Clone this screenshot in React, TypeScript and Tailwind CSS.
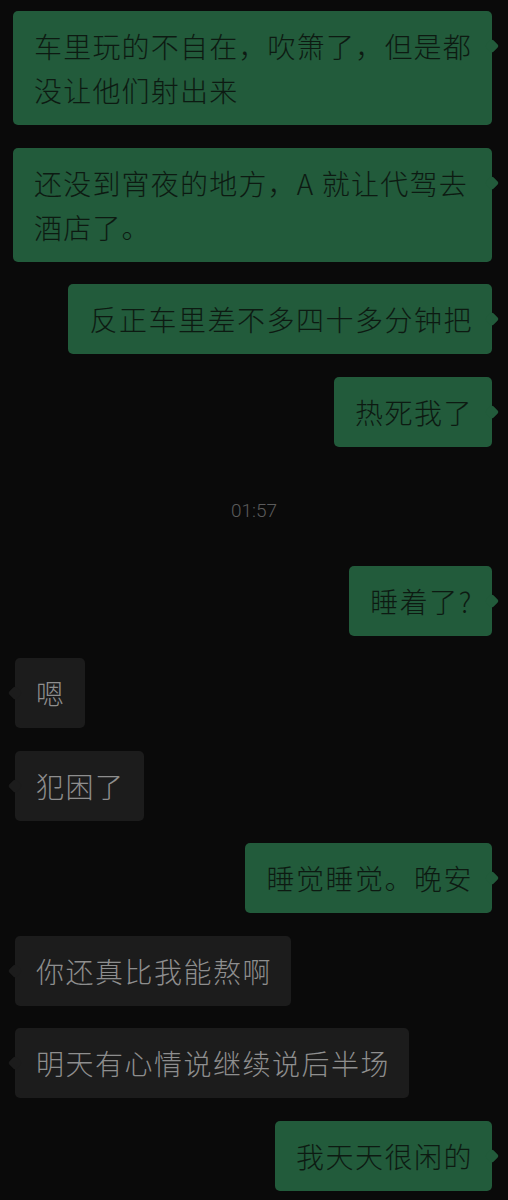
type Msg =
  | { kind: "me"; lines: string[] }
  | { kind: "them"; lines: string[] }
  | { kind: "time"; text: string };

const messages: Msg[] = [
  { kind: "me", lines: ["车里玩的不自在，吹箫了，但是都", "没让他们射出来"] },
  { kind: "me", lines: ["还没到宵夜的地方，A 就让代驾去", "酒店了。"] },
  { kind: "me", lines: ["反正车里差不多四十多分钟把"] },
  { kind: "me", lines: ["热死我了"] },
  { kind: "time", text: "01:57" },
  { kind: "me", lines: ["睡着了?"] },
  { kind: "them", lines: ["嗯"] },
  { kind: "them", lines: ["犯困了"] },
  { kind: "me", lines: ["睡觉睡觉。晚安"] },
  { kind: "them", lines: ["你还真比我能熬啊"] },
  { kind: "them", lines: ["明天有心情说继续说后半场"] },
  { kind: "me", lines: ["我天天很闲的"] },
];

function Bubble({ mine, lines }: { mine: boolean; lines: string[] }) {
  const wrapped = lines.length > 1;
  return (
    <div className={`flex w-full ${mine ? "justify-end pr-4" : "justify-start pl-[15px]"}`}>
      <div
        className={`relative rounded-[5px] py-[13px] pl-[21px] pr-[19px] ${wrapped ? "w-[479px]" : ""} ${
          mine ? "bg-[#225b3b] text-[#0d1a12]" : "bg-[#1c1c1c] text-[#8e8e8e]"
        }`}
      >
        {/* tail */}
        <span
          className={`absolute top-[30px] h-[10px] w-[10px] rotate-45 rounded-[2px] ${
            mine ? "-right-[5px] bg-[#225b3b]" : "-left-[5px] bg-[#1c1c1c]"
          }`}
        />
        <div
          className={`relative whitespace-nowrap text-[28px] font-light leading-[44px] ${
            wrapped ? "tracking-[1.2px]" : "tracking-[1.5px]"
          }`}
        >
          {lines.map((l, i) => (
            <div key={i}>{l}</div>
          ))}
        </div>
      </div>
    </div>
  );
}

export default function App() {
  return (
    <div
      className="flex min-h-[1200px] w-[508px] flex-col gap-[22.5px] bg-[#0a0a0a] pt-[11px]"
      style={{ fontFamily: '"Noto Sans CJK SC", "Noto Sans", sans-serif' }}
    >
      {messages.map((m, i) =>
        m.kind === "time" ? (
          <div
            key={i}
            className="flex h-[74px] items-center justify-center pt-[11px] text-[19px] font-light text-[#5b5b5b]"
            style={{ fontFamily: '"Roboto", "Noto Sans", sans-serif' }}
          >
            {m.text}
          </div>
        ) : (
          <Bubble key={i} mine={m.kind === "me"} lines={m.lines} />
        )
      )}
    </div>
  );
}
